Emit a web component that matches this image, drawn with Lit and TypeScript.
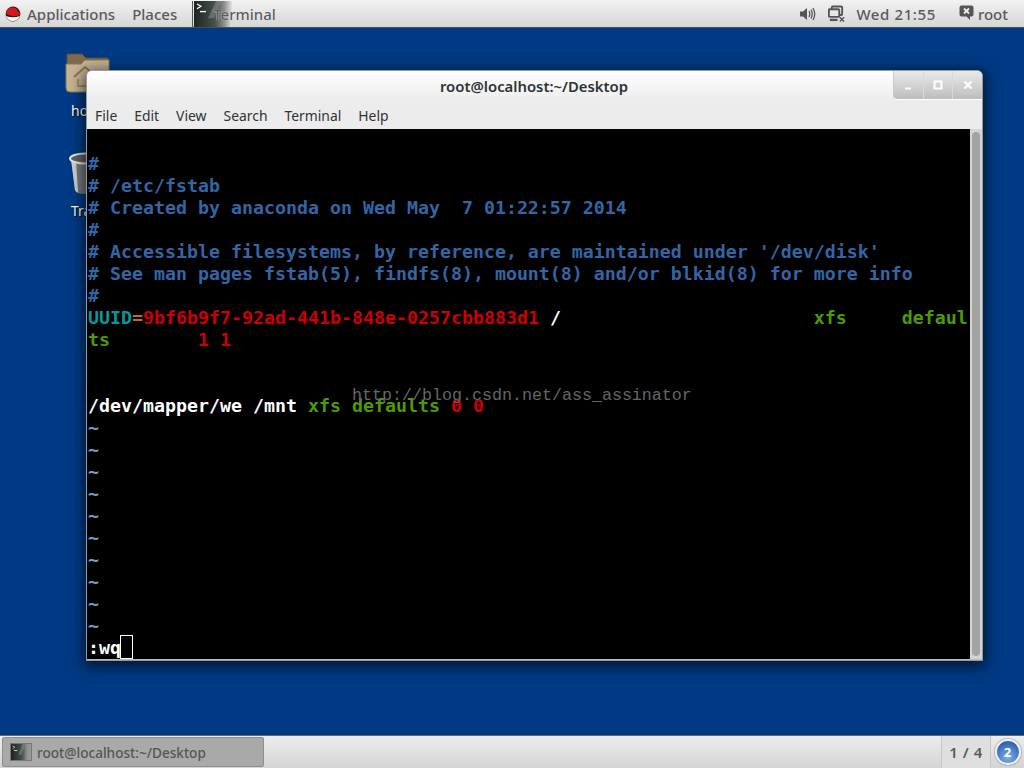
import { LitElement, html, css, svg } from "lit";
import { customElement } from "lit/decorators.js";

const redhat = svg`<svg width="16" height="16" viewBox="0 0 16 16"><circle cx="8" cy="8" r="7.4" fill="#222"/><path d="M1 10A7.4 7.4 0 0 0 15 10Q8 12.5 1 10Z" fill="#f6f6f6"/><path d="M1.2 7.4C1.6 3.4 4.6 1 7.4 1.5C10 1 12.6 3 13.4 6C15.4 7.2 15.2 9.4 12.8 9.8C9 10.4 4 9.8 1.2 7.4Z" fill="#d8141c"/></svg>`;

const termIcon = (w: number, h: number, id: string, end: string) => svg`<svg width="${w}" height="${h}" viewBox="0 0 38 27" preserveAspectRatio="none"><defs><linearGradient id="${id}" x1="0" y1="0" x2="1" y2="0"><stop offset="0" stop-color="#1e2423"/><stop offset=".55" stop-color="#46504e"/><stop offset=".8" stop-color="#8d9190"/><stop offset="1" stop-color="${end}"/></linearGradient></defs><rect width="38" height="27" fill="url(#${id})"/><path d="M22 0L27 0L20 18L14 18Z" fill="#7d8886" opacity=".6"/><path d="M3 3L7 5.5L3 8" fill="none" stroke="#fff" stroke-width="1.2"/><path d="M6 11H12" stroke="#fff" stroke-width="1.4"/></svg>`;

const speaker = svg`<svg width="16" height="14" viewBox="0 0 16 14"><path d="M0 4.5H3L7 1V13L3 9.5H0Z" fill="#555"/><path d="M9 4Q10.5 7 9 10M11 2.5Q13.4 7 11 11.5M13 1Q16.4 7 13 13" fill="none" stroke="#555" stroke-width="1.3"/></svg>`;

const network = svg`<svg width="17" height="18" viewBox="0 0 18 18"><rect x="4" y="1" width="11" height="9" rx="1" fill="none" stroke="#555" stroke-width="2"/><rect x="0.9" y="4" width="11" height="8" rx="1" fill="#e6e6e6" stroke="#555" stroke-width="2"/><path d="M2 14H10V16.5H2Z" fill="#555"/><path d="M12.5 12.5L17 17M17 12.5L12.5 17" stroke="#555" stroke-width="1.6"/></svg>`;

const bubble = svg`<svg width="15" height="16" viewBox="0 0 15 16"><path d="M2.5 0.5H12.5Q14.5 0.5 14.5 2.5V9.5Q14.5 11.5 12.5 11.5H11V15L7.5 11.5H2.5Q0.5 11.5 0.5 9.5V2.5Q0.5 .5 2.5 .5Z" fill="#555"/><path d="M5 3.5L10 8.5M10 3.5L5 8.5" stroke="#eee" stroke-width="1.8"/></svg>`;

const folder = svg`<svg width="46" height="42" viewBox="0 0 46 42"><path d="M2 1H17L21 5H43V20H2Z" fill="#7f6a4b" stroke="#5f4e34"/><path d="M1 11L16 11L20 7H44V36Q44 39 41 39H5Q1 39 1 35Z" fill="#c5b394" stroke="#8b7755"/><path d="M9 24L20 14L26 19" fill="none" stroke="#8b7755" stroke-width="2"/><path d="M13 26V33H23V26" fill="none" stroke="#a08c68" stroke-width="2"/></svg>`;

const trash = svg`<svg width="34" height="44" viewBox="0 0 34 44"><path d="M3 7L7 38Q8 42 17 42Q26 42 28 38L32 7Z" fill="#767a7c"/><path d="M3 7L7 38Q7.6 40 10 40.5L8 8Z" fill="#cfd1d2"/><ellipse cx="17" cy="6.5" rx="15" ry="5" fill="#5d6264" stroke="#e8e8e8" stroke-width="2"/></svg>`;

type Seg = [string, string];
const rows: Seg[][] = [
  [],
  [["c", "#"]],
  [["c", "# /etc/fstab"]],
  [["c", "# Created by anaconda on Wed May  7 01:22:57 2014"]],
  [["c", "#"]],
  [["c", "# Accessible filesystems, by reference, are maintained under '/dev/disk'"]],
  [["c", "# See man pages fstab(5), findfs(8), mount(8) and/or blkid(8) for more info"]],
  [["c", "#"]],
  [["t", "UUID"], ["o", "="], ["r", "9bf6b9f7-92ad-441b-848e-0257cbb883d1"], ["w", " /                       "], ["g", "xfs     defaul"]],
  [["g", "ts"], ["r", "        1 1"]],
  [],
  [],
  [["w", "/dev/mapper/we /mnt "], ["g", "xfs defaults "], ["r", "0 0"]],
  ...Array.from({ length: 10 }, (): Seg[] => [["b", "~"]]),
  [["w", ":wq"]],
];

@customElement("app-root")
export class AppRoot extends LitElement {
  static styles = css`
    :host { display: flex; flex-direction: column; width: 1024px; height: 768px; overflow: hidden; background: #003a84; font-family: "Noto Sans", sans-serif; }
    .top { height: 27px; flex: none; display: flex; align-items: center; padding: 0 16px 0 4px; background: linear-gradient(#f2f2f2, #d6d6d6); border-bottom: 1px solid #4e4e4e; color: #5a5a5a; font-size: 15px; font-weight: 500; }
    .top .logo { display: flex; margin-right: 6px; margin-left: 1px; }
    .places { margin-left: 17px; }
    .tsep { width: 1px; height: 26px; background: #555; margin-left: 15px; margin-right: 1px; }
    .task { position: relative; display: flex; align-items: center; height: 26px; }
    .task svg { display: block; }
    .task span { position: absolute; left: 19px; top: 3px; color: #5a5a5a; text-shadow: 0 0 1px #fff; }
    .right { margin-left: auto; display: flex; align-items: center; }
    .right svg { display: block; }
    .net { margin-left: 12px; }
    .clock { margin-left: 11px; letter-spacing: .6px; }
    .msg { margin-left: 23px; margin-right: 4px; position: relative; top: -1px; }
    .desk { flex: 1; position: relative; background: #003a84; }
    .icon { position: absolute; color: #fff; font-size: 14px; }
    .folder { left: 65px; top: 25px; }
    .bin { left: 68px; top: 124px; }
    .icon svg { display: block; }
    .lbl { position: absolute; white-space: nowrap; text-shadow: 1px 1px 1px #000; }
    .folder .lbl { left: 6px; top: 48px; }
    .bin .lbl { left: 3px; top: 49px; }
    .win { position: absolute; left: 86px; top: 42px; width: 895px; height: 589px; border: 1px solid #9a9a9a; border-radius: 6px 6px 0 0; box-shadow: 0 3px 14px 3px rgba(0,0,0,.6); display: flex; flex-direction: column; background: #ececec; }
    .head { height: 58px; flex: none; position: relative; border-radius: 5px 5px 0 0; background: linear-gradient(#fff 0, #f4f4f4 18px, #ececec 30px); color: #2e3436; }
    .title { text-align: center; font-size: 14.85px; font-weight: 600; line-height: 31px; color: #2e3436; padding-right: 1px; }
    .menu { display: flex; gap: 17px; padding: 0 8px; font-size: 13.9px; line-height: 18px; margin-top: 5px; color: #2e3436; }
    .ctrls { position: absolute; right: 0; top: 0; width: 88px; height: 28px; display: flex; border-radius: 0 5px 0 5px; border-bottom: 1px solid #fff; border-left: 1px solid #c9c9c9; background: linear-gradient(#e9e9e9, #bdbdbd); }
    .ctrls div { flex: 1; display: flex; align-items: center; justify-content: center; border-left: 1px solid #d9d9d9; }
    .ctrls div:first-child { border-left: 0; }
    .body { flex: 1; display: flex; min-height: 0; border-bottom: 1px solid #bbb; }
    .term { flex: 1; background: #000; padding-top: 2px; position: relative; font: 700 18.27px/22px "DejaVu Sans Mono", monospace; color: #fff; overflow: hidden; }
    .row { height: 22px; padding-left: 1px; white-space: pre; }
    .c { color: #3465a4; }
    .t { color: #06989a; }
    .o { color: #c4700a; }
    .r { color: #cc0000; }
    .g { color: #4e9a06; }
    .w { color: #fff; }
    .b { color: #729fcf; }
    .cursor { position: absolute; left: 33px; top: 506px; width: 13px; height: 24px; border: 1px solid #fff; box-sizing: border-box; background: #000; }
    .mark { position: absolute; left: 265px; top: 257px; font: 400 16.67px/20px "Liberation Mono", monospace; color: #666; }
    .sb { width: 12px; flex: none; background: #d4d4d4; padding: 3px 2px; box-sizing: border-box; }
    .thumb { height: 100%; width: 8px; border-radius: 4px; background: #a3a3a3; }
    .bottom { height: 32px; flex: none; display: flex; align-items: stretch; border-top: 1px solid #6a6a6a; background: linear-gradient(#eeeeee, #d4d4d4); color: #5a5a5a; }
    .tb { width: 262px; margin: 1px 0 1px 2px; display: flex; align-items: center; gap: 5px; padding-left: 7px; box-sizing: border-box; background: #a9a9a9; border: 1px solid #8f8f8f; border-radius: 2px; font-size: 13.6px; font-weight: 500; color: #555; }
    .tb svg { display: block; border: 1px solid #777; }
    .pager { margin-left: auto; width: 50px; display: flex; align-items: center; justify-content: center; font-size: 15px; font-weight: 600; letter-spacing: .5px; border-left: 1px solid #c6c6c6; border-right: 1px solid #c6c6c6; background: #dfdfdf; box-sizing: border-box; }
    .notif { width: 33px; display: flex; align-items: center; justify-content: center; }
    .badge { width: 22px; height: 22px; border-radius: 50%; border: 2px solid #f2f2f2; box-shadow: 0 0 2px #555; background: radial-gradient(circle at 50% 75%, #7fb0e6, #2f66b3 75%); color: #fff; font-size: 13px; font-weight: 700; display: flex; align-items: center; justify-content: center; flex: none; }
  `;

  render() {
    return html`
      <div class="top">
        <span class="logo">${redhat}</span>
        <span>Applications</span>
        <span class="places">Places</span>
        <span class="tsep"></span>
        <div class="task">${termIcon(38, 26, "tg1", "#e2e2e2")}<span>Terminal</span></div>
        <div class="right">
          ${speaker}
          <span class="net">${network}</span>
          <span class="clock">Wed 21:55</span>
          <span class="msg">${bubble}</span>
          <span>root</span>
        </div>
      </div>
      <div class="desk">
        <div class="icon folder">${folder}<span class="lbl">home</span></div>
        <div class="icon bin">${trash}<span class="lbl">Trash</span></div>
        <div class="win">
          <div class="head">
            <div class="title">root@localhost:~/Desktop</div>
            <div class="menu"><span>File</span><span>Edit</span><span>View</span><span>Search</span><span>Terminal</span><span>Help</span></div>
            <div class="ctrls">
              <div><svg width="10" height="10" viewBox="0 0 10 10"><path d="M2 8.5H8" stroke="#fff" stroke-width="2"/></svg></div>
              <div><svg width="10" height="10" viewBox="0 0 10 10"><rect x="1.5" y="1.5" width="7" height="7" fill="none" stroke="#fff" stroke-width="2"/></svg></div>
              <div><svg width="10" height="10" viewBox="0 0 10 10"><path d="M1.5 1.5L8.5 8.5M8.5 1.5L1.5 8.5" stroke="#fff" stroke-width="2.2"/></svg></div>
            </div>
          </div>
          <div class="body">
            <div class="term">
              ${rows.map((r) => html`<div class="row">${r.map(([k, t]) => html`<span class=${k}>${t}</span>`)}</div>`)}
              <div class="mark">http://blog.csdn.net/ass_assinator</div>
              <div class="cursor"></div>
            </div>
            <div class="sb"><div class="thumb"></div></div>
          </div>
        </div>
      </div>
      <div class="bottom">
        <div class="tb">${termIcon(20, 16, "tg2", "#9a9a9a")}<span>root@localhost:~/Desktop</span></div>
        <div class="pager">1 / 4</div>
        <div class="notif"><div class="badge">2</div></div>
      </div>
    `;
  }
}
